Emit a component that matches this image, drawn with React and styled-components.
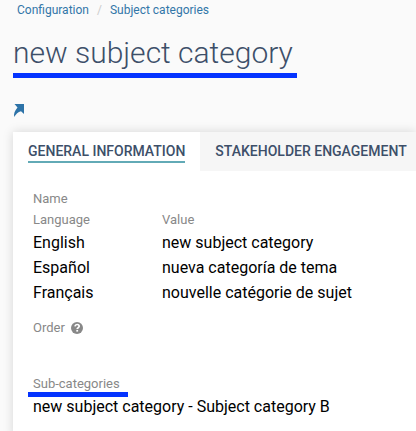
import styled, { createGlobalStyle } from "styled-components";

const GlobalStyle = createGlobalStyle`
  * {
    box-sizing: border-box;
  }
  body {
    margin: 0;
    background-color: #fafafa;
    font-family: Roboto, sans-serif;
    font-size: 16px;
    color: #000;
  }
`;

const Container = styled.div`
  min-height: 100vh;
  padding-left: 13px;
  display: flex;
  flex-direction: column;
  overflow: hidden;
`;

const Breadcrumb = styled.nav`
  display: flex;
  gap: 8px;
  padding: 0 4px;
  font-size: 12px;
  line-height: 20px;
`;

const Crumb = styled.a`
  color: #3276a8;
  text-decoration: none;
`;

const Separator = styled.span`
  color: #ccc;
`;

const Title = styled.h1`
  align-self: flex-start;
  margin: 12px 0 0;
  padding-right: 4px;
  border-bottom: 5px solid #0433ff;
  font-family: "Roboto Light", Roboto, sans-serif;
  font-size: 30px;
  font-weight: 300;
  line-height: 41px;
  color: #3d4f69;
`;

const Toolbar = styled.div`
  display: flex;
  padding: 26px 0 15px;
`;

const IconLink = styled.a`
  display: flex;
  color: #2d73a8;
`;

const Card = styled.main`
  flex: 1;
  background-color: #fff;
  box-shadow: 0 0 10px rgba(0, 0, 0, 0.15);
`;

const Tabs = styled.div`
  display: flex;
  background-color: #f6f6f6;
`;

const Tab = styled.button`
  height: 39px;
  padding: 0 15px;
  border: none;
  background-color: ${(props) => (props.$active ? "#fff" : "transparent")};
  font-family: inherit;
  font-size: 14px;
  font-weight: 500;
  line-height: 20px;
  white-space: nowrap;
  color: #3d4f69;
  cursor: pointer;
`;

const TabText = styled.span`
  display: block;
  border-bottom: 2px solid
    ${(props) => (props.$active ? "#62aab6" : "transparent")};
`;

const Panel = styled.div`
  padding: 18px 20px;
`;

const Table = styled.table`
  width: 100%;
  border-collapse: collapse;
  table-layout: fixed;
`;

const Caption = styled.caption`
  font-size: 13px;
  line-height: 20px;
  text-align: left;
  color: #888;
`;

const HeadCell = styled.th`
  width: ${(props) => props.$width};
  padding: 0;
  font-size: 13px;
  font-weight: 400;
  line-height: 21px;
  text-align: left;
  color: #888;
`;

const Cell = styled.td`
  padding: 0;
  line-height: 25px;
  white-space: nowrap;
`;

const Field = styled.div`
  margin-top: ${(props) => props.$gap};
`;

const Label = styled.div`
  display: flex;
  align-items: center;
  gap: 6px;
  font-size: 13px;
  line-height: 20px;
  color: #888;
`;

const MarkedLabel = styled(Label)`
  position: relative;

  &::after {
    content: "";
    position: absolute;
    top: 18px;
    left: -5px;
    width: 100px;
    height: 5px;
    background-color: #0433ff;
  }
`;

const Value = styled.div`
  line-height: 25px;
`;

const names = [
  { language: "English", value: "new subject category" },
  { language: "Español", value: "nueva categoría de tema" },
  { language: "Français", value: "nouvelle catégorie de sujet" },
];

const ArrowIcon = () => (
  <svg width="11" height="13" viewBox="0 0 11 13" fill="currentColor">
    <path d="M1.500 0H11V10L8 7.200C5 8 3 10 1.200 13C.6 9.800 1.700 7 4.500 3.600Z" />
  </svg>
);

const HelpIcon = () => (
  <svg width="12" height="12" viewBox="0 0 12 12">
    <circle cx="6" cy="6" r="6" fill="#888" />
    <path
      d="M3.900 4.400C4.200 2.900 5.200 2.500 6.100 2.500C7.200 2.500 8.200 3.200 8.200 4.300C8.200 5.700 6.200 5.700 6.200 7"
      fill="none"
      stroke="#fff"
      strokeWidth="1.700"
    />
    <rect x="5.300" y="7.900" width="1.800" height="1.700" fill="#fff" />
  </svg>
);

const App = () => {
  return (
    <>
      <GlobalStyle />
      <Container>
        <Breadcrumb>
          <Crumb href="#configuration">Configuration</Crumb>
          <Separator>/</Separator>
          <Crumb href="#categories">Subject categories</Crumb>
        </Breadcrumb>
        <Title>new subject category</Title>
        <Toolbar>
          <IconLink href="#open" aria-label="Open">
            <ArrowIcon />
          </IconLink>
        </Toolbar>
        <Card>
          <Tabs>
            <Tab type="button" $active>
              <TabText $active>GENERAL INFORMATION</TabText>
            </Tab>
            <Tab type="button">
              <TabText>STAKEHOLDER ENGAGEMENT</TabText>
            </Tab>
          </Tabs>
          <Panel>
            <Table>
              <Caption>Name</Caption>
              <thead>
                <tr>
                  <HeadCell $width="129px">Language</HeadCell>
                  <HeadCell>Value</HeadCell>
                </tr>
              </thead>
              <tbody>
                {names.map((name) => (
                  <tr key={name.language}>
                    <Cell>{name.language}</Cell>
                    <Cell>{name.value}</Cell>
                  </tr>
                ))}
              </tbody>
            </Table>
            <Field $gap="13px">
              <Label>
                Order
                <HelpIcon />
              </Label>
            </Field>
            <Field $gap="36px">
              <MarkedLabel>Sub-categories</MarkedLabel>
              <Value>new subject category - Subject category B</Value>
            </Field>
          </Panel>
        </Card>
      </Container>
    </>
  );
};

export default App;
